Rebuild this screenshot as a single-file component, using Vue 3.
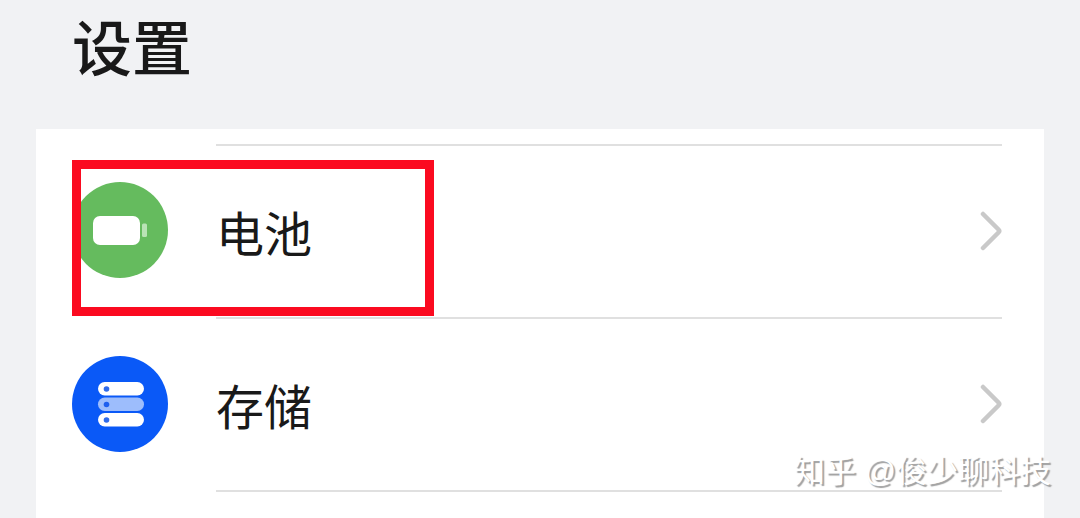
<script setup>
const items = [
  { id: 'battery', label: '电池', marked: true },
  { id: 'storage', label: '存储', marked: false },
]
</script>

<template>
  <div class="page">
    <header class="header">
      <h1 class="title">设置</h1>
    </header>
    <main class="card">
      <ul class="list">
        <li v-for="item in items" :key="item.id" class="item">
          <button type="button" class="row">
            <svg v-if="item.id === 'battery'" class="icon" viewBox="0 0 96 96" aria-hidden="true">
              <circle cx="48" cy="48" r="48" fill="#65bb5e" />
              <rect x="21" y="34" width="47" height="29" rx="7" fill="#fff" />
              <rect x="70" y="41.500" width="5" height="13.500" rx="1.500" fill="#b9e3b5" />
            </svg>
            <svg v-else class="icon" viewBox="0 0 96 96" aria-hidden="true">
              <circle cx="48" cy="48" r="48" fill="#0a59f7" />
              <rect x="26" y="26" width="46" height="13.500" rx="6.700" fill="#fff" />
              <rect x="26" y="41.500" width="46" height="13.500" rx="6.700" fill="#9dbdfc" />
              <rect x="26" y="57" width="46" height="13.500" rx="6.700" fill="#fff" />
              <circle cx="34.500" cy="33" r="2.800" fill="#2f6bea" />
              <circle cx="34.500" cy="48.500" r="2.800" fill="#1e5fee" />
              <circle cx="34.500" cy="64" r="2.800" fill="#2f6bea" />
            </svg>
            <span class="body">
              <span class="label">{{ item.label }}</span>
              <svg class="chevron" viewBox="0 0 24 40" aria-hidden="true">
                <path d="M5 3 L20.500 18.500 Q22 20 20.500 21.500 L5 37" fill="none" stroke="#c9c9c9" stroke-width="4.500" stroke-linecap="round" stroke-linejoin="round" />
              </svg>
            </span>
          </button>
          <span v-if="item.marked" class="mark"></span>
        </li>
      </ul>
    </main>
    <div class="watermark">知乎 @俊少聊科技</div>
  </div>
</template>

<style>
body {
  margin: 0;
}
</style>

<style scoped>
.page {
  position: relative;
  display: flex;
  flex-direction: column;
  box-sizing: border-box;
  min-height: 100vh;
  padding: 0 36px;
  overflow: hidden;
  background: #f1f2f4;
  color: #191919;
  font-family: "Noto Sans CJK SC", sans-serif;
}

.header {
  padding: 5px 36px 44px;
}

.title {
  margin: 0;
  font-size: 60px;
  line-height: 80px;
  font-weight: 500;
}

.card {
  flex: 1;
  padding: 15px 42px 24px 36px;
  background: #fff;
}

.list {
  margin: 0;
  padding: 0;
  list-style: none;
}

.item {
  position: relative;
}

.row {
  display: flex;
  align-items: stretch;
  gap: 48px;
  width: 100%;
  padding: 0;
  border: 0;
  background: none;
  color: inherit;
  font: inherit;
  text-align: left;
  cursor: pointer;
}

.icon {
  flex: none;
  align-self: center;
  width: 96px;
  height: 96px;
  margin-bottom: 4px;
}

.body {
  display: flex;
  flex: 1;
  align-items: center;
  justify-content: space-between;
  height: 169px;
  padding-bottom: 2px;
  border-bottom: 2px solid #e0e0e0;
}

.item:first-child .body {
  border-top: 2px solid #e0e0e0;
}

.label {
  font-size: 48px;
  line-height: 64px;
}

.chevron {
  width: 24px;
  height: 40px;
}

.mark {
  position: absolute;
  top: 16px;
  left: 0;
  box-sizing: border-box;
  width: 362px;
  height: 156px;
  border: 9px solid #fb0a20;
  pointer-events: none;
}

.watermark {
  position: absolute;
  right: 29px;
  bottom: 24px;
  color: #fff;
  font-family: "Liberation Sans", "Noto Sans CJK SC", sans-serif;
  font-size: 31px;
  line-height: 44px;
  text-shadow: 2px 2px 1px #a0a0a0;
  white-space: nowrap;
}
</style>
